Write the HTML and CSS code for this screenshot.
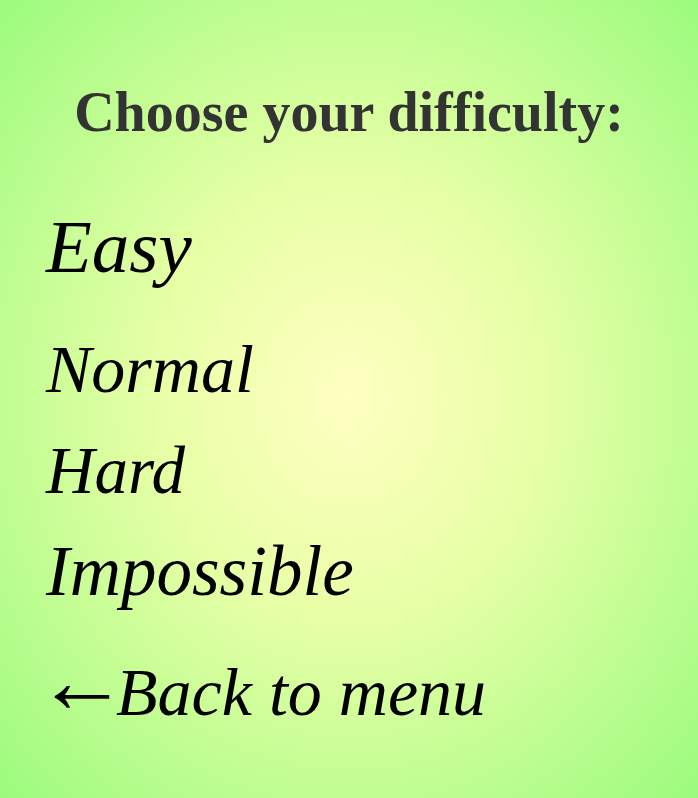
FILE: index.html
```html
<!DOCTYPE html>
<html>
<head>
<meta charset="utf-8">
<link rel="stylesheet" href="styles.css">
</head>
<body>
<main class="screen">
  <h1 class="title">Choose your difficulty:</h1>
  <nav class="menu">
    <a class="item item-easy" href="#">Easy</a>
    <a class="item item-normal" href="#">Normal</a>
    <a class="item item-hard" href="#">Hard</a>
    <a class="item item-impossible" href="#">Impossible</a>
    <a class="item item-back" href="#"><span class="arrow">←</span>Back to menu</a>
  </nav>
</main>
</body>
</html>
```
FILE: styles.css
```css
html, body {
  margin: 0;
  padding: 0;
  height: 100%;
}
body {
  background: radial-gradient(ellipse at center, #ffffc0 0%, #e6ffa6 40%, #9bfb7e 100%);
  overflow: hidden;
}
.screen {
  height: 798px;
  box-sizing: border-box;
  padding-top: 80px;
}
.title {
  margin: 0;
  font-family: "Liberation Serif", serif;
  font-weight: bold;
  font-size: 56px;
  line-height: 64px;
  color: #333333;
  text-align: center;
}
.menu {
  display: flex;
  flex-direction: column;
  align-items: flex-start;
  padding-left: 46px;
  margin-top: 65px;
}
.item {
  font-family: "Liberation Serif", serif;
  font-style: italic;
  color: #000;
  text-decoration: none;
  line-height: 1;
}
.item-easy { font-size: 75px; }
.item-normal { font-size: 68px; margin-top: 51px; }
.item-hard { font-size: 67px; margin-top: 34px; }
.item-impossible { font-size: 71px; margin-top: 32px; }
.item-back { font-size: 68px; margin-top: 51px; }
.arrow {
  font-family: "Liberation Serif", serif;
  font-style: normal;
  font-size: 92px;
  line-height: 0;
  vertical-align: 3px;
  margin-left: -10px;
  margin-right: -12px;
}
```
